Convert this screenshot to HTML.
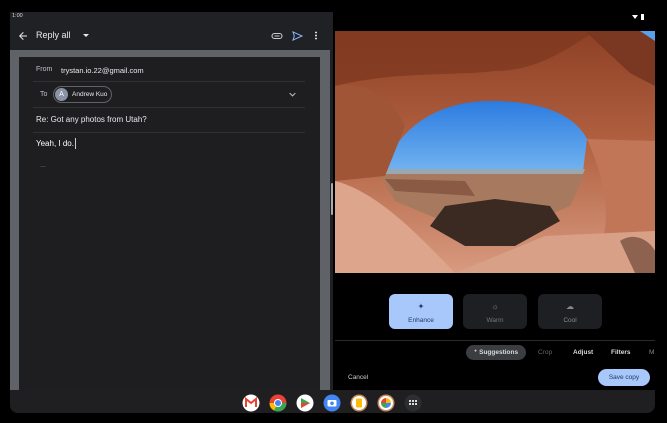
<!DOCTYPE html>
<html><head><meta charset="utf-8"><style>
*{margin:0;padding:0;box-sizing:border-box}
body{width:667px;height:423px;background:#000;position:relative;overflow:hidden;font-family:"Liberation Sans",sans-serif;color:#e8eaed}
.a{position:absolute}
</style></head><body>
<div class="a" style="left:10px;top:12px;width:323px;height:401px;background:#202124;border-radius:0 0 8px 8px"></div>
<div class="a" style="left:12px;top:13px;font-size:5.5px;color:#ddd">1:00</div>
<svg class="a" style="left:17px;top:30px" width="12" height="12" viewBox="0 0 24 24"><path d="M20 11H7.8l5.6-5.6L12 4l-8 8 8 8 1.4-1.4L7.8 13H20z" fill="#e8eaed"/></svg>
<div class="a" style="left:36px;top:30px;font-size:9px;color:#e8eaed">Reply all</div>
<div class="a" style="left:83px;top:34px;width:0;height:0;border-left:3px solid transparent;border-right:3px solid transparent;border-top:3px solid #e8eaed"></div>
<svg class="a" style="left:271px;top:31px" width="12" height="10" viewBox="0 0 24 20"><rect x="2" y="5" width="20" height="10" rx="5" fill="none" stroke="#ccc" stroke-width="2.2"/><line x1="7" y1="10" x2="17" y2="10" stroke="#ccc" stroke-width="2"/></svg>
<svg class="a" style="left:292px;top:31px" width="11" height="10" viewBox="0 0 24 22"><path d="M2 2l20 9-20 9 3-9z" fill="none" stroke="#8ab4f8" stroke-width="2.2"/></svg>
<div class="a" style="left:315px;top:31px;width:2px;height:9px;background:radial-gradient(circle,#ddd 0.9px,transparent 1px) 0 0/2px 3px"></div>
<div class="a" style="left:10px;top:50px;width:320px;height:340px;background:#5f6368"></div>
<div class="a" style="left:19px;top:57px;width:301px;height:333px;background:#1e1e21"></div>
<div class="a" style="left:36px;top:66px;font-size:7px;color:#bdc1c6">From</div>
<div class="a" style="left:61px;top:66px;font-size:7.5px;color:#e8eaed">trystan.io.22@gmail.com</div>
<div class="a" style="left:33px;top:81px;width:272px;height:1px;background:#303134"></div>
<div class="a" style="left:40px;top:91px;font-size:7px;color:#bdc1c6">To</div>
<div class="a" style="left:53px;top:86px;width:59px;height:17px;border:1px solid #5f6368;border-radius:9px"></div>
<div class="a" style="left:55px;top:88px;width:13px;height:13px;border-radius:50%;background:#8a94a6;font-size:7px;color:#fff;text-align:center;line-height:13px">A</div>
<div class="a" style="left:72px;top:91px;font-size:6.5px;color:#e8eaed">Andrew Kuo</div>
<svg class="a" style="left:289px;top:92px" width="7" height="5" viewBox="0 0 10 6"><path d="M1 1l4 4 4-4" fill="none" stroke="#bbb" stroke-width="1.5"/></svg>
<div class="a" style="left:33px;top:107px;width:272px;height:1px;background:#303134"></div>
<div class="a" style="left:36px;top:115px;font-size:8px;color:#e8eaed">Re: Got any photos from Utah?</div>
<div class="a" style="left:33px;top:132px;width:272px;height:1px;background:#303134"></div>
<div class="a" style="left:36px;top:139px;font-size:8px;color:#fff">Yeah, I do.</div>
<div class="a" style="left:75px;top:138px;width:1px;height:11px;background:#ccc"></div>
<div class="a" style="left:40px;top:162px;font-size:7px;color:#888">...</div>
<div class="a" style="left:331px;top:183px;width:2px;height:32px;background:#aaa;border-radius:1px"></div>
<svg class="a" style="left:632px;top:14px" width="14" height="7" viewBox="0 0 14 7"><path d="M0 1h6L3 5z" fill="#fff"/><rect x="9" y="0" width="3" height="6" fill="#fff"/></svg>
<svg class="a" style="left:335px;top:31px" width="320" height="242" viewBox="0 0 320 242">
<defs>
<linearGradient id="sky" x1="0" y1="0" x2="0" y2="1"><stop offset="0" stop-color="#2b7be0"/><stop offset="1" stop-color="#72b3f0"/></linearGradient>
<linearGradient id="rock" x1="0" y1="0" x2="0" y2="1"><stop offset="0" stop-color="#8e4026"/><stop offset=".45" stop-color="#b0603f"/><stop offset="1" stop-color="#d89a80"/></linearGradient>
</defs>
<rect width="320" height="242" fill="url(#rock)"/>
<path d="M250 0h70v55L295 42z" fill="#7a3722"/>
<path d="M305 0h15v10z" fill="#5aa0ea"/>
<path d="M0 0 H260 C230 20 200 40 160 40 C120 45 60 40 0 55Z" fill="#7e381f" opacity=".8"/>
<path d="M50 140 C60 100 100 70 155 70 C210 70 240 85 252 108 L248 140 Z" fill="url(#sky)"/>
<path d="M48 138 H250 L248 143 H48Z" fill="#9aa7b0"/>
<path d="M45 143 L250 143 L235 175 L200 190 L120 195 L60 170 Z" fill="#a77a60"/>
<path d="M50 148 L130 150 L140 165 L60 160Z" fill="#8a5a44"/>
<path d="M110 175 L160 168 L215 175 L225 190 L180 215 L130 215 L95 195Z" fill="#3a2a22"/>
<path d="M0 55 C30 50 55 65 70 95 L50 145 L0 150Z" fill="#a05536"/>
<path d="M252 108 C270 150 280 190 260 230 L320 240 L320 110Z" fill="#c27658"/>
<path d="M0 150 C40 160 80 200 120 242 L0 242Z" fill="#dda58b"/>
<path d="M120 242 L210 205 L320 200 L320 242Z" fill="#d9a088"/>
<path d="M285 210 C300 200 315 210 320 220 L320 242 L300 242Z" fill="#5a3a2a" opacity=".6"/>
</svg>
<div class="a" style="left:389px;top:294px;width:64px;height:35px;background:#a8c7fa;border-radius:6px"></div>
<div class="a" style="left:389px;top:302px;width:64px;text-align:center;font-size:8px;color:#1f3b66">✦</div>
<div class="a" style="left:389px;top:317px;width:64px;text-align:center;font-size:6.5px;color:#1f3b66">Enhance</div>
<div class="a" style="left:463px;top:294px;width:64px;height:35px;background:#1e1f22;border-radius:6px"></div>
<div class="a" style="left:463px;top:302px;width:64px;text-align:center;font-size:8px;color:#888">☼</div>
<div class="a" style="left:463px;top:317px;width:64px;text-align:center;font-size:6.5px;color:#777">Warm</div>
<div class="a" style="left:538px;top:294px;width:64px;height:35px;background:#1e1f22;border-radius:6px"></div>
<div class="a" style="left:538px;top:302px;width:64px;text-align:center;font-size:8px;color:#888">☁</div>
<div class="a" style="left:538px;top:317px;width:64px;text-align:center;font-size:6.5px;color:#888">Cool</div>
<div class="a" style="left:335px;top:340px;width:320px;height:1px;background:#2a2a2c"></div>
<div class="a" style="left:466px;top:345px;width:60px;height:15px;background:#3c3d41;border-radius:8px;font-size:6.5px;line-height:15px;text-align:center;color:#d7dae0;font-weight:bold">⁺ Suggestions</div>
<div class="a" style="left:538px;top:349px;font-size:6.5px;color:#666">Crop</div>
<div class="a" style="left:573px;top:349px;font-size:6.5px;color:#d7dae0;font-weight:bold">Adjust</div>
<div class="a" style="left:611px;top:349px;font-size:6.5px;color:#d7dae0;font-weight:bold">Filters</div>
<div class="a" style="left:649px;top:349px;font-size:6.5px;color:#888">M</div>
<div class="a" style="left:348px;top:374px;font-size:6.5px;color:#ccc">Cancel</div>
<div class="a" style="left:598px;top:369px;width:52px;height:17px;background:#a8c7fa;border-radius:9px;font-size:6.5px;line-height:17px;text-align:center;color:#1f3b66">Save copy</div>
<div class="a" style="left:10px;top:390px;width:645px;height:23px;background:#1f1f21;border-radius:0 0 8px 8px"></div>
<svg class="a" style="left:242px;top:394px" width="180" height="18" viewBox="0 0 180 18">
<circle cx="9" cy="9" r="8.5" fill="#fff"/><path d="M4 13V5l5 4 5-4v8" fill="none" stroke="#ea4335" stroke-width="2"/>
<circle cx="36" cy="9" r="8.5" fill="#ea4335"/><path d="M36 9 L44.5 9 A8.5 8.5 0 0 1 32 16.5z" fill="#34a853"/><path d="M36 9 L32 16.5 A8.5 8.5 0 0 1 27.5 9z" fill="#fbbc04"/><circle cx="36" cy="9" r="4" fill="#fff"/><circle cx="36" cy="9" r="3" fill="#4285f4"/>
<circle cx="63" cy="9" r="8.5" fill="#fff"/><path d="M59 4l9 5-9 5z" fill="#34a853"/><path d="M59 9l9 0-9 5z" fill="#ea4335"/>
<circle cx="90" cy="9" r="8.5" fill="#4285f4"/><rect x="85.5" y="6" width="9" height="6.5" rx="1" fill="#fff"/><circle cx="90" cy="9.3" r="1.8" fill="#4285f4"/>
<circle cx="117" cy="9" r="8.5" fill="#c98a5c"/><circle cx="117" cy="9" r="7" fill="#fff"/><rect x="114" y="4.5" width="6" height="9" rx="1" fill="#fbbc04"/>
<circle cx="144" cy="9" r="8.5" fill="#c98a5c"/><circle cx="144" cy="9" r="7" fill="#fff"/><path d="M144 9 h-5 a5 5 0 0 1 5-5z" fill="#ea4335"/><path d="M144 9 v-5 a5 5 0 0 1 5 5z" fill="#fbbc04"/><path d="M144 9 h5 a5 5 0 0 1-5 5z" fill="#4285f4"/><path d="M144 9 v5 a5 5 0 0 1-5-5z" fill="#34a853"/>
<circle cx="171" cy="9" r="8.5" fill="#2d2e31"/>
<g fill="#ddd"><rect x="167" y="6" width="2" height="2"/><rect x="170" y="6" width="2" height="2"/><rect x="173" y="6" width="2" height="2"/><rect x="167" y="9" width="2" height="2"/><rect x="170" y="9" width="2" height="2"/><rect x="173" y="9" width="2" height="2"/></g>
</svg>
</body></html>
